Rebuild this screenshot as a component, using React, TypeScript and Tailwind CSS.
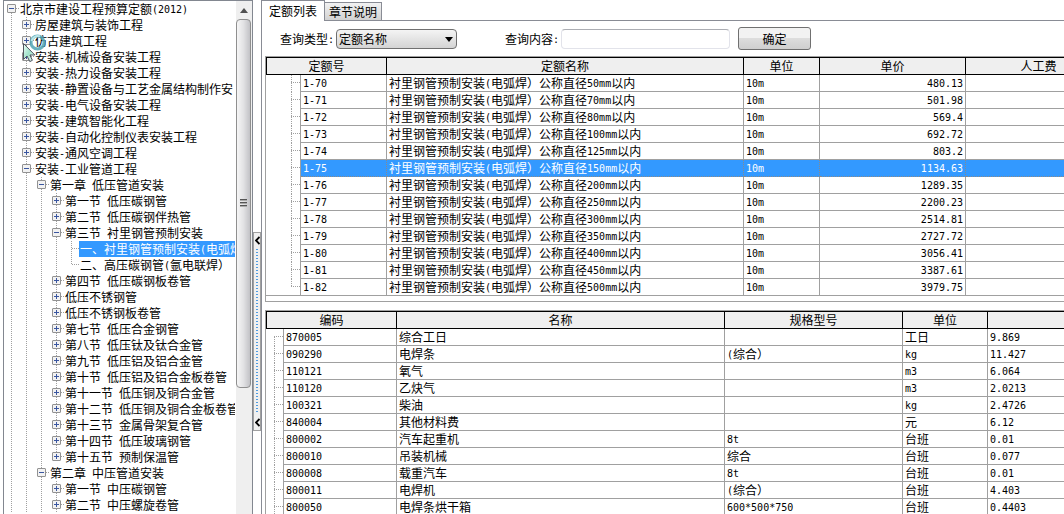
import { useState } from 'react';
import clsx from 'clsx';

type Branch = 'open' | 'closed' | 'leaf';

interface TreeNode {
  level: number;
  label: string;
  branch: Branch;
  last?: boolean;
}

const TREE: TreeNode[] = [
  { level: 0, label: '北京市建设工程预算定额(2012)', branch: 'open' },
  { level: 1, label: '房屋建筑与装饰工程', branch: 'closed' },
  { level: 1, label: '仿古建筑工程', branch: 'closed' },
  { level: 1, label: '安装-机械设备安装工程', branch: 'closed' },
  { level: 1, label: '安装-热力设备安装工程', branch: 'closed' },
  { level: 1, label: '安装-静置设备与工艺金属结构制作安', branch: 'closed' },
  { level: 1, label: '安装-电气设备安装工程', branch: 'closed' },
  { level: 1, label: '安装-建筑智能化工程', branch: 'closed' },
  { level: 1, label: '安装-自动化控制仪表安装工程', branch: 'closed' },
  { level: 1, label: '安装-通风空调工程', branch: 'closed' },
  { level: 1, label: '安装-工业管道工程', branch: 'open' },
  { level: 2, label: '第一章 低压管道安装', branch: 'open' },
  { level: 3, label: '第一节 低压碳钢管', branch: 'closed' },
  { level: 3, label: '第二节 低压碳钢伴热管', branch: 'closed' },
  { level: 3, label: '第三节 衬里钢管预制安装', branch: 'open' },
  { level: 4, label: '一、衬里钢管预制安装(电弧焊）', branch: 'leaf' },
  { level: 4, label: '二、高压碳钢管(氩电联焊）', branch: 'leaf', last: true },
  { level: 3, label: '第四节 低压碳钢板卷管', branch: 'closed' },
  { level: 3, label: '低压不锈钢管', branch: 'closed' },
  { level: 3, label: '低压不锈钢板卷管', branch: 'closed' },
  { level: 3, label: '第七节 低压合金钢管', branch: 'closed' },
  { level: 3, label: '第八节 低压钛及钛合金管', branch: 'closed' },
  { level: 3, label: '第九节 低压铝及铝合金管', branch: 'closed' },
  { level: 3, label: '第十节 低压铝及铝合金板卷管', branch: 'closed' },
  { level: 3, label: '第十一节 低压铜及铜合金管', branch: 'closed' },
  { level: 3, label: '第十二节 低压铜及铜合金板卷管', branch: 'closed' },
  { level: 3, label: '第十三节 金属骨架复合管', branch: 'closed' },
  { level: 3, label: '第十四节 低压玻璃钢管', branch: 'closed' },
  { level: 3, label: '第十五节 预制保温管', branch: 'closed', last: true },
  { level: 2, label: '第二章 中压管道安装', branch: 'open' },
  { level: 3, label: '第一节 中压碳钢管', branch: 'closed' },
  { level: 3, label: '第二节 中压螺旋卷管', branch: 'closed' },
];

const QUOTAS = [
  { code: '1-70', size: 50, price: '480.13' },
  { code: '1-71', size: 70, price: '501.98' },
  { code: '1-72', size: 80, price: '569.4' },
  { code: '1-73', size: 100, price: '692.72' },
  { code: '1-74', size: 125, price: '803.2' },
  { code: '1-75', size: 150, price: '1134.63' },
  { code: '1-76', size: 200, price: '1289.35' },
  { code: '1-77', size: 250, price: '2200.23' },
  { code: '1-78', size: 300, price: '2514.81' },
  { code: '1-79', size: 350, price: '2727.72' },
  { code: '1-80', size: 400, price: '3056.41' },
  { code: '1-81', size: 450, price: '3387.61' },
  { code: '1-82', size: 500, price: '3979.75' },
];

const MATERIALS = [
  ['870005', '综合工日', '', '工日', '9.869'],
  ['090290', '电焊条', '(综合）', 'kg', '11.427'],
  ['110121', '氧气', '', 'm3', '6.064'],
  ['110120', '乙炔气', '', 'm3', '2.0213'],
  ['100321', '柴油', '', 'kg', '2.4726'],
  ['840004', '其他材料费', '', '元', '6.12'],
  ['800002', '汽车起重机', '8t', '台班', '0.01'],
  ['800010', '吊装机械', '综合', '台班', '0.077'],
  ['800008', '载重汽车', '8t', '台班', '0.01'],
  ['800011', '电焊机', '(综合）', '台班', '4.403'],
  ['800050', '电焊条烘干箱', '600*500*750', '台班', '0.4403'],
];

const QUOTA_HEADS = ['定额号', '定额名称', '单位', '单价', '人工费'];
const MATERIAL_HEADS = ['编码', '名称', '规格型号', '单位', ''];

// Latin runs are set in a half-width mono face, two characters per ideograph.
function Mixed({ text }: { text: string }) {
  return (
    <>
      {text.split(/([\x20-\x7e]+)/).map((run, i) =>
        i % 2 ? (
          <span
            key={i}
            className="whitespace-pre align-[1px] font-['DejaVu_Sans_Mono',monospace] text-[10px] leading-none"
          >
            {run}
          </span>
        ) : (
          run
        ),
      )}
    </>
  );
}

function Guide() {
  return (
    <svg width="15" height="16" className="shrink-0" stroke="#a0a0a0" aria-hidden="true">
      <path d="M7.5 0V16" strokeDasharray="1 1" />
    </svg>
  );
}

function Joint({ node }: { node: TreeNode }) {
  const top = node.level === 0 ? 8 : 0;
  const bottom = node.last ? 8 : 16;
  const lines = (
    <path d={`M7.5 ${top}V${bottom}M8 7.5H15`} stroke="#a0a0a0" strokeDasharray="1 1" />
  );
  if (node.branch === 'leaf') {
    return (
      <svg width="15" height="16" className="shrink-0" aria-hidden="true">
        {lines}
      </svg>
    );
  }
  return (
    <button type="button" aria-label={node.branch === 'open' ? '折叠' : '展开'} className="h-4 w-[15px] shrink-0">
      <svg width="15" height="16" aria-hidden="true" className="block">
        {lines}
        <rect x="3.5" y="3.5" width="8" height="8" rx="0.5" fill="#f2f2f2" stroke="#929292" />
        <path d="M5 7.5H10" stroke="#3a56a0" />
        {node.branch === 'closed' && <path d="M7.5 5V10" stroke="#3a56a0" />}
      </svg>
    </button>
  );
}

function TreeRow({ node, selected }: { node: TreeNode; selected: boolean }) {
  return (
    <li className="flex h-4">
      {Array.from({ length: node.level }, (_, i) => (
        <Guide key={i} />
      ))}
      <Joint node={node} />
      <span
        className={clsx(
          'min-w-0 flex-1 overflow-hidden whitespace-nowrap pl-px',
          selected && 'bg-[#3399ff] text-white',
        )}
      >
        <Mixed text={node.label} />
      </span>
    </li>
  );
}

function ScrollBar() {
  return (
    <div className="flex w-4 shrink-0 flex-col bg-[#efefef]">
      <button type="button" aria-label="向上滚动" className="flex h-[18px] w-4 items-center justify-center">
        <svg width="8" height="5" aria-hidden="true">
          <path d="M4 0L8 5H0Z" fill="#505050" />
        </svg>
      </button>
      <div className="flex h-[72%] w-[15px] items-center justify-center rounded-sm border border-[#8f8f8f] bg-linear-to-r from-[#f6f6f6] via-[#e2e2e4] to-[#c2c2c6]">
        <svg width="7" height="9" stroke="#555" aria-hidden="true">
          <path d="M0 0.5H7M0 3.5H7M0 6.5H7" />
          <path d="M0 1.5H7M0 4.5H7M0 7.5H7" stroke="#aaa" />
        </svg>
      </div>
    </div>
  );
}

function Chevron() {
  return (
    <svg width="5" height="9" fill="none" stroke="#000" strokeWidth="1.8" className="shrink-0" aria-hidden="true">
      <path d="M4.5 1L1 4.5L4.5 8" />
    </svg>
  );
}

function Splitter() {
  return (
    <div className="flex w-2 shrink-0 flex-col">
      <div className="grow-[232]" />
      <button
        type="button"
        aria-label="收起目录"
        className="flex h-[199px] w-2 shrink-0 flex-col items-center justify-between border border-[#a0a0a0] bg-[#f0f0f0] py-[3px]"
      >
        <Chevron />
        <span className="my-1 w-0.5 flex-1 bg-[repeating-linear-gradient(to_bottom,#4f9be0_0_1px,transparent_1px_3px)]" />
        <Chevron />
      </button>
      <div className="grow-[83]" />
    </div>
  );
}

function BusyCursor() {
  return (
    <svg width="28" height="30" className="pointer-events-none absolute left-[22px] top-[34px]" aria-hidden="true">
      <defs>
        <linearGradient id="arrow" x1="0" y1="0" x2="1" y2="1">
          <stop offset="0" stopColor="#f4fffb" />
          <stop offset="0.5" stopColor="#9fe3ca" />
          <stop offset="1" stopColor="#fff" />
        </linearGradient>
      </defs>
      <circle cx="15.5" cy="8.5" r="6.5" fill="none" stroke="#4fa3b3" strokeWidth="3" strokeOpacity="0.85" />
      <path d="M9.5 7A6.5 6.5 0 0 1 18 2.5" fill="none" stroke="#b9e6ea" strokeWidth="2" />
      <path
        d="M1.5 9.5V25.5L5 22L7.8 27.6L10.4 26.3L7.9 21H12.8Z"
        fill="url(#arrow)"
        stroke="#50545e"
      />
    </svg>
  );
}

// The first heading spans the connector column as well.
function HeadRow({ titles }: { titles: string[] }) {
  return (
    <thead>
      <tr>
        {titles.map((title, i) => (
          <th
            key={i}
            colSpan={i === 0 ? 2 : 1}
            className={clsx(
              'h-[18px] border-y border-r border-black bg-[#efefef] p-0 text-center font-normal',
              i === 0 && 'border-l',
            )}
          >
            {title}
          </th>
        ))}
      </tr>
    </thead>
  );
}

// Dotted connector in the narrow column left of each record.
function Stem({ width, x, first, last }: { width: number; x: number; first?: boolean; last?: boolean }) {
  return (
    <svg width={width} height={last ? 16 : 17} className="block" stroke="#a0a0a0" aria-hidden="true">
      <path d={`M${x}.5 ${first ? 8 : 0}V${last ? 8 : 17}M${x} 7.5H${width}`} strokeDasharray="1 1" />
    </svg>
  );
}

const CELL = 'h-[17px] whitespace-nowrap border-b border-r px-0.5 py-0 leading-4';

function QuotaTable() {
  const [selected, setSelected] = useState('1-75');
  return (
    <div className="shrink-0 overflow-hidden border-y border-l border-[#a0a0a0] pb-[5px]">
      <table className="w-[846px] table-fixed border-separate border-spacing-0">
        <colgroup>
          <col className="w-[35px]" />
          <col className="w-[86px]" />
          <col className="w-[357px]" />
          <col className="w-[76px]" />
          <col className="w-[146px]" />
          <col className="w-[146px]" />
        </colgroup>
        <HeadRow titles={QUOTA_HEADS} />
        <tbody>
          {QUOTAS.map((q, i) => {
            const last = i === QUOTAS.length - 1;
            const cell = clsx(
              CELL,
              q.code === selected
                ? 'border-dotted border-[#8a8a8a] bg-[#3399ff] text-white'
                : 'border-[#a0a0a0]',
            );
            return (
              <tr key={q.code} onClick={() => setSelected(q.code)}>
                <td className={clsx('border-r border-[#a0a0a0] p-0', last && 'border-b')}>
                  <Stem width={34} x={25} last={last} />
                </td>
                <td className={cell}>
                  <Mixed text={q.code} />
                </td>
                <td className={cell}>
                  <Mixed text={`衬里钢管预制安装(电弧焊）公称直径${q.size}mm以内`} />
                </td>
                <td className={cell}>
                  <Mixed text="10m" />
                </td>
                <td className={clsx(cell, 'text-right')}>
                  <Mixed text={q.price} />
                </td>
                <td className={cell} />
              </tr>
            );
          })}
        </tbody>
      </table>
    </div>
  );
}

function MaterialTable() {
  return (
    <div className="mt-2 min-h-0 flex-1 overflow-hidden border-l border-t border-[#a0a0a0]">
      <table className="w-[922px] table-fixed border-separate border-spacing-0">
        <colgroup>
          <col className="w-[18px]" />
          <col className="w-[113px]" />
          <col className="w-[328px]" />
          <col className="w-[178px]" />
          <col className="w-[85px]" />
          <col className="w-[200px]" />
        </colgroup>
        <HeadRow titles={MATERIAL_HEADS} />
        <tbody>
          {MATERIALS.map((row, i) => (
            <tr key={row[0]}>
              <td className="border-r border-[#a0a0a0] p-0">
                <Stem width={17} x={8} first={i === 0} />
              </td>
              {row.map((value, j) => (
                <td key={j} className={clsx(CELL, 'border-[#a0a0a0]')}>
                  <Mixed text={value} />
                </td>
              ))}
            </tr>
          ))}
        </tbody>
      </table>
    </div>
  );
}

function QueryBar() {
  return (
    <form className="flex h-[35px] items-center pl-[15px]" onSubmit={(e) => e.preventDefault()}>
      <label htmlFor="kind" className="w-14 shrink-0">
        <Mixed text="查询类型:" />
      </label>
      <div className="relative w-[121px] shrink-0">
        <select
          id="kind"
          className="block h-5 w-full appearance-none rounded-sm border border-[#707070] bg-linear-to-b from-[#f4f4f4] to-[#d4d4d4] pl-0.5 leading-4"
        >
          <option>定额名称</option>
        </select>
        <svg width="8" height="5" className="pointer-events-none absolute right-1 top-2" aria-hidden="true">
          <path d="M0 0H8L4 5Z" />
        </svg>
      </div>
      <label htmlFor="content" className="ml-12 w-14 shrink-0">
        <Mixed text="查询内容:" />
      </label>
      <input
        id="content"
        type="text"
        className="h-5 w-[169px] rounded-sm border border-[#e2e3ea] border-t-[#abadb3] bg-white px-1"
      />
      <button
        type="submit"
        className="ml-2 h-[23px] w-[73px] shrink-0 rounded-[3px] border border-[#707070] bg-linear-to-b from-[#f2f2f2] from-50% via-[#dddddd] via-50% to-[#cfcfcf]"
      >
        确定
      </button>
    </form>
  );
}

export default function App() {
  return (
    <div className="relative flex h-screen overflow-hidden bg-white pl-[3px] font-['Noto_Sans_CJK_SC',sans-serif] text-xs leading-4 text-black">
      <nav aria-label="定额目录" className="flex w-[250px] shrink-0 overflow-hidden border-x border-t border-[#828790]">
        <ul className="min-w-0 flex-1 pr-px">
          {TREE.map((node, i) => (
            <TreeRow key={i} node={node} selected={i === 15} />
          ))}
        </ul>
        <ScrollBar />
      </nav>
      <Splitter />
      <main className="flex min-w-0 flex-1 flex-col border-l border-[#898c95]">
        <div role="tablist" className="flex h-[21px] shrink-0 items-stretch">
          <button
            type="button"
            role="tab"
            aria-selected="true"
            className="border-r border-t border-[#898c95] bg-white px-[7px]"
          >
            定额列表
          </button>
          <div className="flex flex-1 items-end border-b border-[#898c95]">
            <button
              type="button"
              role="tab"
              aria-selected="false"
              className="h-[18px] border-r border-t border-[#898c95] bg-linear-to-b from-[#f2f2f2] to-[#d2d2d2] px-1"
            >
              章节说明
            </button>
          </div>
        </div>
        <div className="flex min-h-0 flex-1 flex-col pl-[3px]">
          <QueryBar />
          <QuotaTable />
          <MaterialTable />
        </div>
      </main>
      <BusyCursor />
    </div>
  );
}
